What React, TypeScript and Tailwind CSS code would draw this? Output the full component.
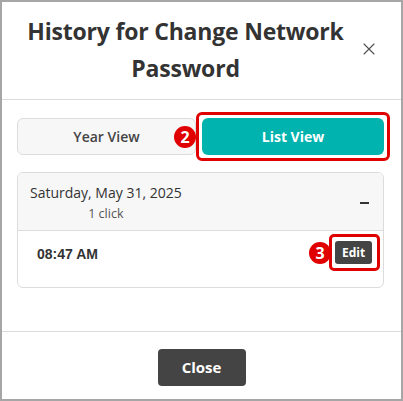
import { X } from "lucide-react";

function Marker({ n }: { n: number }) {
  return (
    <div className="absolute flex h-[22px] w-[22px] items-center justify-center rounded-full bg-[#e00000] text-[16px] font-bold leading-none text-white">
      {n}
    </div>
  );
}

export default function App() {
  return (
    <div
      className="flex h-[401px] w-[403px] flex-col border-2 border-[#a6a6a6] bg-white text-[#333]"
      style={{ fontFamily: '"Open Sans", "Noto Sans", sans-serif' }}
    >
      {/* header */}
      <div className="flex h-[98px] items-center border-b border-[#dcdcdc] pl-[22px] pr-[22px]">
        <h1 className="mt-[-2px] flex-1 text-center text-[23px] font-bold leading-[37px] tracking-[-0.2px] text-[#333]">
          History for Change Network Password
        </h1>
        <button className="ml-3 mt-[-4px] text-[#555]">
          <X size={20} strokeWidth={1.4} />
        </button>
      </div>

      {/* body */}
      <div className="flex-1 border-b border-[#dcdcdc] pl-[15px] pr-[17px] pt-[18px]">
        <div className="relative flex h-[37px] gap-[6px]">
          <button className="w-[179px] rounded-[6px] border border-[#dcdcdc] bg-[#f7f7f7] text-[14px] font-semibold text-[#444]">
            Year View
          </button>
          <div className="relative flex-1">
            <div className="absolute inset-[-6px] rounded-[6px] border-[3px] border-[#e00000]" />
            <button className="h-full w-full rounded-[6px] bg-[#00b3af] text-[14px] font-bold text-white">
              List View
            </button>
            <div className="absolute left-[-28px] top-[8px]">
              <Marker n={2} />
            </div>
          </div>
        </div>

        <div className="mt-[17px] overflow-hidden rounded-[6px] border border-[#dcdcdc]">
          <div className="flex h-[58px] items-start border-b border-[#dcdcdc] bg-[#f7f7f7] px-[12px] pt-[10px]">
            <div className="flex flex-col items-center">
              <span className="text-[14px] leading-[20px] text-[#333]">Saturday, May 31, 2025</span>
              <span className="mt-[3px] text-[12.5px] leading-[16px] text-[#555]">1 click</span>
            </div>
            <span className="ml-auto mr-[2px] mt-[19px] h-[2px] w-[9px] bg-[#333]" />
          </div>
          <div className="flex h-[56px] items-start pl-[19px] pr-[11px] pt-[12px]">
            <span
              className="mt-[1px] text-[14px] font-bold text-[#333]"
              style={{ fontFamily: '"Liberation Sans", Arial, sans-serif' }}
            >
              08:47 AM
            </span>
            <div className="relative ml-auto mt-[-2px]">
              <div className="absolute bottom-[-7px] left-[-6px] right-[-8px] top-[-7px] rounded-[5px] border-[3px] border-[#e00000]" />
              <button className="flex h-[23px] w-[37px] items-center justify-center rounded-[3px] bg-[#444] text-[12px] font-bold text-white">
                Edit
              </button>
              <div className="absolute left-[-26px] top-[1px]">
                <Marker n={3} />
              </div>
            </div>
          </div>
        </div>
      </div>

      {/* footer */}
      <div className="flex h-[67px] items-start justify-center pt-[17px]">
        <button className="h-[37px] w-[88px] rounded-[4px] bg-[#444] text-[15px] font-bold text-white">
          Close
        </button>
      </div>
    </div>
  );
}
